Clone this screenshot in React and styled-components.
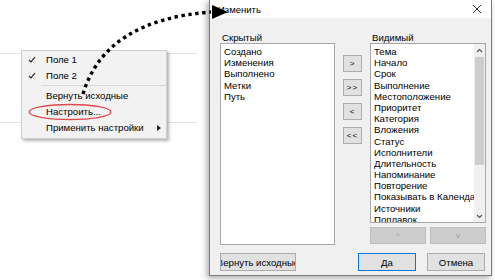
import styled, { createGlobalStyle } from "styled-components";

const Global = createGlobalStyle`
  html, body { margin: 0; padding: 0; background: #ffffff; }
  body { font-family: "Liberation Sans", Arial, sans-serif; }
`;

const hidden = ["Создано", "Изменения", "Выполнено", "Метки", "Путь"];
const visible = [
  "Тема", "Начало", "Срок", "Выполнение", "Местоположение", "Приоритет",
  "Категория", "Вложения", "Статус", "Исполнители", "Длительность",
  "Напоминание", "Повторение", "Показывать в Календаре", "Источники", "Поплавок",
];

export default function App() {
  return (
    <>
      <Global />
      <Page>
        <LeftPane>
          <GridLine top={53} />
          <GridLine top={68} />
          <Menu>
            <MenuItem>
              <Check><CheckIcon /></Check>
              Поле 1
            </MenuItem>
            <MenuItem>
              <Check><CheckIcon /></Check>
              Поле 2
            </MenuItem>
            <Separator />
            <MenuItem>Вернуть исходные</MenuItem>
            <MenuItem>Настроить...</MenuItem>
            <MenuItem>
              Применить настройки
              <SubArrow />
            </MenuItem>
          </Menu>
        </LeftPane>

        <Dialog>
          <TitleBar>
            <Title>Изменить</Title>
            <CloseIcon />
          </TitleBar>
          <Body>
            <Columns>
              <Column>
                <Label>Скрытый</Label>
                <ListBox tall>
                  <Items>
                    {hidden.map(h => <Item key={h}>{h}</Item>)}
                  </Items>
                </ListBox>
              </Column>
              <MoveButtons>
                <SmallButton>&gt;</SmallButton>
                <SmallButton>&gt;&gt;</SmallButton>
                <SmallButton>&lt;</SmallButton>
                <SmallButton>&lt;&lt;</SmallButton>
              </MoveButtons>
              <Column>
                <Label>Видимый</Label>
                <ListBox>
                  <Items>
                    {visible.map(v => <Item key={v}>{v}</Item>)}
                  </Items>
                  <Scrollbar>
                    <ScrollArrow><Chevron up /></ScrollArrow>
                    <Track>
                      <Thumb />
                    </Track>
                    <ScrollArrow><Chevron /></ScrollArrow>
                  </Scrollbar>
                </ListBox>
                <OrderRow>
                  <DisabledButton>^</DisabledButton>
                  <DisabledButton>v</DisabledButton>
                </OrderRow>
              </Column>
            </Columns>
            <Footer>
              <Button width={76}>Вернуть исходные</Button>
              <FooterRight>
                <Button width={58} primary>Да</Button>
                <Button width={58}>Отмена</Button>
              </FooterRight>
            </Footer>
          </Body>
        </Dialog>

        <Overlay width="495" height="280" viewBox="0 0 495 280">
          <ellipse cx="70" cy="112" rx="41" ry="7.5" fill="none" stroke="#e0484c" strokeWidth="1.3" />
          <path d="M 83 94 Q 105 20 211 12" fill="none" stroke="#000" strokeWidth="3.4" strokeDasharray="3.4 3.6" />
          <polygon points="212,5 228,12 212,19" fill="#000" />
        </Overlay>
      </Page>
    </>
  );
}

function CheckIcon() {
  return (
    <svg width="8" height="7" viewBox="0 0 8 7">
      <polyline points="1,3.8 3,5.8 7,1.2" fill="none" stroke="#222" strokeWidth="1.2" />
    </svg>
  );
}

function SubArrow() {
  return (
    <ArrowWrap>
      <svg width="4" height="6" viewBox="0 0 4 6">
        <polygon points="0,0 4,3 0,6" fill="#222" />
      </svg>
    </ArrowWrap>
  );
}

function CloseIcon() {
  return (
    <CloseWrap>
      <svg width="10" height="10" viewBox="0 0 10 10">
        <path d="M1 1 L9 9 M9 1 L1 9" stroke="#333" strokeWidth="1" />
      </svg>
    </CloseWrap>
  );
}

function Chevron({ up }) {
  return (
    <svg width="7" height="5" viewBox="0 0 7 5">
      <polyline points={up ? "1,4 3.5,1.5 6,4" : "1,1 3.5,3.5 6,1"} fill="none" stroke="#555" strokeWidth="1.2" />
    </svg>
  );
}

const Page = styled.div`
  position: relative;
  width: 495px;
  height: 280px;
  display: flex;
  background: #ffffff;
  overflow: hidden;
  font-size: 9.6px;
  color: #000;
`;

const LeftPane = styled.div`
  position: relative;
  flex: 0 0 209px;
  display: flex;
  flex-direction: column;
`;

const GridLine = styled.div`
  margin-top: ${p => p.top}px;
  width: 197px;
  height: 1px;
  background: #e2e2e2;
`;

const Menu = styled.div`
  position: absolute;
  left: 21px;
  top: 50px;
  width: 144px;
  padding: 1px 0 2px;
  background: #f2f2f2;
  border: 1px solid #cfcfcf;
  box-shadow: 2px 2px 3px rgba(0, 0, 0, 0.3);
`;

const MenuItem = styled.div`
  position: relative;
  height: 16px;
  line-height: 16px;
  padding-left: 24px;
  white-space: nowrap;
`;

const Check = styled.span`
  position: absolute;
  left: 6px;
  top: 4px;
  display: flex;
`;

const ArrowWrap = styled.span`
  position: absolute;
  right: 5px;
  top: 5px;
  display: flex;
`;

const Separator = styled.div`
  height: 1px;
  margin: 1px 0 2px 19px;
  background: #d7d7d7;
`;

const Dialog = styled.div`
  flex: 0 0 283px;
  height: 276px;
  box-sizing: border-box;
  display: flex;
  flex-direction: column;
  border: 1px solid #7a7a7a;
  border-top: none;
  background: #f0f0f0;
  box-shadow: -2px 2px 6px rgba(0, 0, 0, 0.35);
`;

const TitleBar = styled.div`
  height: 18px;
  flex: 0 0 18px;
  display: flex;
  align-items: center;
  justify-content: space-between;
  background: #ffffff;
  padding: 0 9px 0 8px;
`;

const Title = styled.span`
  font-size: 9.5px;
`;

const CloseWrap = styled.span`
  display: flex;
`;

const Body = styled.div`
  flex: 1;
  display: flex;
  flex-direction: column;
  padding: 14px 5px 0 10px;
`;

const Columns = styled.div`
  display: grid;
  grid-template-columns: 115px 19px 116px;
  column-gap: 8px;
`;

const Column = styled.div`
  display: flex;
  flex-direction: column;
`;

const Label = styled.div`
  height: 11px;
  line-height: 11px;
  padding-left: 2px;
`;

const ListBox = styled.div`
  box-sizing: border-box;
  height: ${p => (p.tall ? 202 : 180)}px;
  background: #ffffff;
  border: 1px solid #a7a7a7;
  display: flex;
  overflow: hidden;
`;

const Items = styled.div`
  flex: 1;
  padding: 2px 0 0 3px;
  overflow: hidden;
  min-width: 0;
`;

const Item = styled.div`
  height: 11.2px;
  line-height: 11.2px;
  white-space: nowrap;
`;

const Scrollbar = styled.div`
  flex: 0 0 11px;
  display: flex;
  flex-direction: column;
  background: #f0f0f0;
`;

const ScrollArrow = styled.div`
  height: 12px;
  display: flex;
  align-items: center;
  justify-content: center;
  background: #f0f0f0;
`;

const Track = styled.div`
  flex: 1;
  padding: 1px 1px;
`;

const Thumb = styled.div`
  height: 108px;
  background: #cdcdcd;
`;

const MoveButtons = styled.div`
  display: flex;
  flex-direction: column;
  gap: 7px;
  padding-top: 23px;
`;

const SmallButton = styled.div`
  box-sizing: border-box;
  height: 17px;
  display: flex;
  align-items: center;
  justify-content: center;
  background: #e1e1e1;
  border: 1px solid #adadad;
  font-size: 8px;
  letter-spacing: 1px;
`;

const OrderRow = styled.div`
  display: flex;
  justify-content: space-between;
  margin-top: 4px;
`;

const DisabledButton = styled.div`
  box-sizing: border-box;
  width: 56px;
  height: 17px;
  display: flex;
  align-items: center;
  justify-content: center;
  background: #cccccc;
  border: 1px solid #bfbfbf;
  color: #9a9a9a;
  font-size: 8px;
`;

const Footer = styled.div`
  display: flex;
  justify-content: space-between;
  margin-top: 8px;
  padding-right: 1px;
`;

const FooterRight = styled.div`
  display: flex;
  gap: 11px;
`;

const Button = styled.div`
  box-sizing: border-box;
  width: ${p => p.width}px;
  height: 18px;
  display: flex;
  align-items: center;
  justify-content: center;
  white-space: nowrap;
  overflow: hidden;
  background: #e1e1e1;
  border: 1px solid ${p => (p.primary ? "#0078d7" : "#adadad")};
`;

const Overlay = styled.svg`
  position: absolute;
  left: 0;
  top: 0;
  pointer-events: none;
`;
